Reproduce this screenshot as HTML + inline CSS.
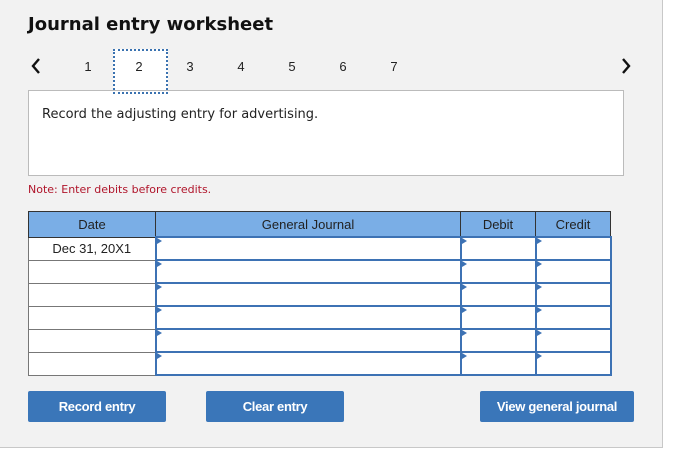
<!DOCTYPE html>
<html><head><style>
body{margin:0;width:687px;height:451px;background:#fff;position:relative;font-family:"Liberation Sans",Arial,sans-serif;overflow:hidden}
.panel{position:absolute;left:0;top:0;width:662px;height:447px;background:#f2f2f2;border-right:1px solid #c8c8c8;border-bottom:1px solid #c8c8c8}
.abs{position:absolute}
h1{position:absolute;left:28px;top:14px;margin:0;font:bold 18px "DejaVu Sans",Verdana,sans-serif;color:#111}
.tab{position:absolute;top:59px;font-size:13px;color:#222;width:20px;text-align:center}
.box{position:absolute;left:28px;top:90px;width:594px;height:84px;background:#fff;border:1px solid #bbb}
.q{position:absolute;left:42px;top:107px;font:13px "DejaVu Sans",Verdana,sans-serif;color:#222}
.note{position:absolute;left:28px;top:183px;font:11px "DejaVu Sans",Verdana,sans-serif;color:#b0152b}
table{position:absolute;left:28px;top:211px;border-collapse:collapse}
td,th{padding:0;height:22px;border:1px solid #777;font-size:13px}
th{background:#7aaee6;font-weight:normal;color:#222;height:24px;border-color:#333}
td.d{background:#fff;text-align:center;color:#222}
td.i{background:#fff;border:2px solid #3d72b4;position:relative;height:19px}
td.i:before{content:"";position:absolute;left:0;top:0;border-left:5px solid #3d72b4;border-top:3px solid transparent;border-bottom:3px solid transparent}
.btn{position:absolute;top:391px;height:31px;background:#3a76b9;color:#fff;font-weight:bold;font-size:13px;text-align:center;line-height:31px;border-radius:2px;letter-spacing:-.3px}
</style></head><body>
<div class="panel"></div>
<h1>Journal entry worksheet</h1>
<svg class="abs" style="left:30px;top:58px" width="12" height="16"><path d="M9 1 L3 8 L9 15" stroke="#111" stroke-width="2.4" fill="none"/></svg>
<svg class="abs" style="left:620px;top:58px" width="12" height="16"><path d="M3 1 L9 8 L3 15" stroke="#111" stroke-width="2.4" fill="none"/></svg>
<div class="abs" style="left:113px;top:49px;width:51px;height:42px;background:#fff;border:2px dotted #3a72b0;border-bottom:none"></div>
<div class="tab" style="left:78px">1</div><div class="tab" style="left:129px">2</div><div class="tab" style="left:180px">3</div><div class="tab" style="left:231px">4</div><div class="tab" style="left:282px">5</div><div class="tab" style="left:333px">6</div><div class="tab" style="left:384px">7</div>
<div class="box"></div>
<div class="abs" style="left:113px;top:89px;width:55px;height:3px;border-bottom:2px dotted #3a72b0"></div>
<div class="q">Record the adjusting entry for advertising.</div>
<div class="note">Note: Enter debits before credits.</div>
<table>
<tr><th style="width:126px">Date</th><th style="width:304px">General Journal</th><th style="width:74px">Debit</th><th style="width:74px">Credit</th></tr>
<tr><td class="d">Dec 31, 20X1</td><td class="i"></td><td class="i"></td><td class="i"></td></tr>
<tr><td class="d"></td><td class="i"></td><td class="i"></td><td class="i"></td></tr>
<tr><td class="d"></td><td class="i"></td><td class="i"></td><td class="i"></td></tr>
<tr><td class="d"></td><td class="i"></td><td class="i"></td><td class="i"></td></tr>
<tr><td class="d"></td><td class="i"></td><td class="i"></td><td class="i"></td></tr>
<tr><td class="d"></td><td class="i"></td><td class="i"></td><td class="i"></td></tr>
</table>
<div class="btn" style="left:28px;width:138px">Record entry</div>
<div class="btn" style="left:206px;width:138px">Clear entry</div>
<div class="btn" style="left:480px;width:154px">View general journal</div>
</body></html>
